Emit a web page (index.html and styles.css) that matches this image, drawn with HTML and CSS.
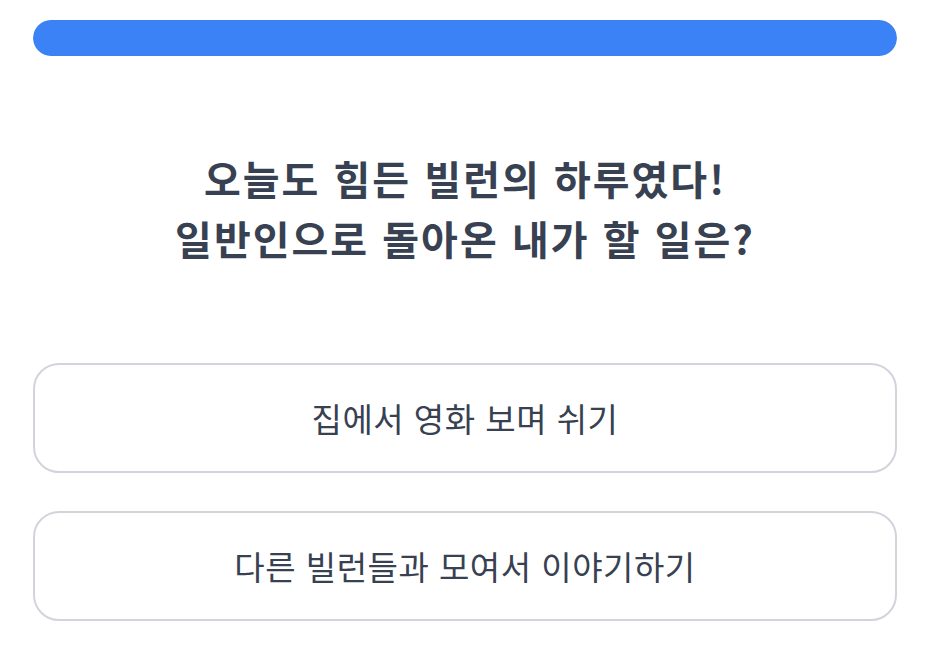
FILE: index.html
```html
<!DOCTYPE html>
<html lang="ko">
<head>
<meta charset="utf-8">
<link rel="stylesheet" href="styles.css">
</head>
<body>
<main class="page">
  <div class="progress"><div class="progress-fill" style="width:100%"></div></div>
  <h1 class="question">오늘도 힘든 빌런의 하루였다!<br>일반인으로 돌아온 내가 할 일은?</h1>
  <div class="options">
    <button class="option">집에서 영화 보며 쉬기</button>
    <button class="option">다른 빌런들과 모여서 이야기하기</button>
  </div>
</main>
</body>
</html>
```
FILE: styles.css
```css
html, body {
  margin: 0;
  padding: 0;
  background: #ffffff;
}
body {
  font-family: "Noto Sans CJK KR", "Noto Sans", sans-serif;
  color: #374151;
}
.page {
  padding: 20px 31px 0 33px;
  display: flex;
  flex-direction: column;
}
.progress {
  height: 36px;
  border-radius: 18px;
  background: #e5e7eb;
  overflow: hidden;
}
.progress-fill {
  height: 100%;
  background: #3b82f6;
  border-radius: 18px;
}
.question {
  margin: 92px 0 0;
  text-align: center;
  font-size: 40px;
  font-weight: 700;
  letter-spacing: 2px;
  line-height: 60px;
  color: #374151;
}
.options {
  margin-top: 95px;
  display: flex;
  flex-direction: column;
  gap: 38px;
}
.option {
  height: 110px;
  border: 2px solid #d1d5db;
  border-radius: 26px;
  background: #ffffff;
  font-family: "Noto Sans CJK KR", "Noto Sans", sans-serif;
  font-size: 33px;
  letter-spacing: 0.5px;
  color: #374151;
  padding: 0;
}
```
